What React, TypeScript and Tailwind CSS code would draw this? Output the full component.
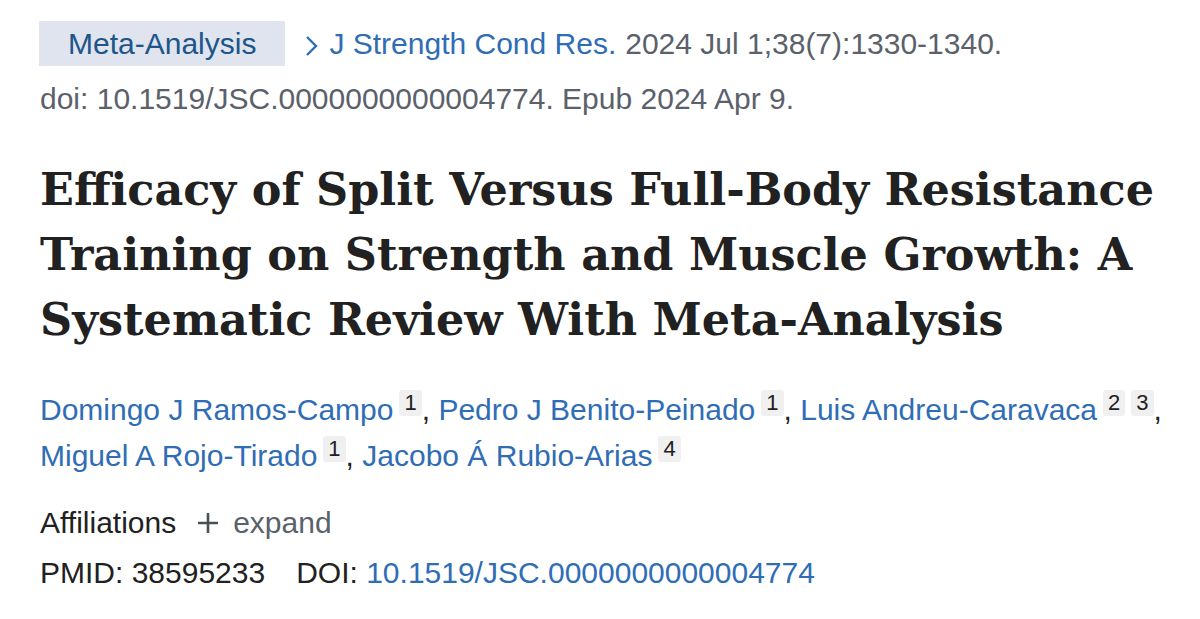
import React from "react";

const sans = { fontFamily: '"Liberation Sans", Arial, sans-serif' };

function Aff({ n }: { n: string }) {
  return (
    <span className="relative top-[-9px] ml-[6px] inline-block rounded-[3px] bg-[#f0f0f0] px-[5px] align-middle text-[22px] leading-[26px] text-[#212121]">
      {n}
    </span>
  );
}

function Author({ name, affs }: { name: string; affs: string[] }) {
  return (
    <span>
      <a className="text-[#2f6db5]">{name}</a>
      {affs.map((a) => (
        <Aff key={a} n={a} />
      ))}
    </span>
  );
}

export default function App() {
  return (
    <div className="min-h-screen w-full bg-white pl-[40px] pt-[21px] text-[30px]" style={sans}>
      {/* header row */}
      <div className="flex items-center">
        <span className="-ml-[1px] inline-block h-[45px] bg-[#dfe4ee] px-[29px] leading-[45px] text-[#20558a]">
          Meta-Analysis
        </span>
        <span className="ml-[20px] text-[#2f6db5]">
          <svg className="mr-[10px] inline-block" width="14" height="22" viewBox="0 0 14 22">
            <path d="M2 2 L11 11 L2 20" stroke="#2f6db5" strokeWidth="2.4" fill="none" />
          </svg>
          J Strength Cond Res.
        </span>
        <span className="ml-[9px] text-[#5b616b]">2024 Jul 1;38(7):1330-1340.</span>
      </div>
      <div className="mt-[16px] leading-[34px] text-[#5b616b]">
        doi: 10.1519/JSC.0000000000004774. Epub 2024 Apr 9.
      </div>

      {/* title */}
      <h1
        className="mt-[41px] text-[44.5px] font-bold leading-[65px] text-[#212121]"
        style={{ fontFamily: '"DejaVu Serif", Georgia, serif' }}
      >
        Efficacy of Split Versus Full-Body Resistance
        <br />
        Training on Strength and Muscle Growth: A
        <br />
        Systematic Review With Meta-Analysis
      </h1>

      {/* authors */}
      <div className="mt-[35px] leading-[46px] text-[#212121]">
        <Author name="Domingo J Ramos-Campo" affs={["1"]} />,{" "}
        <Author name="Pedro J Benito-Peinado" affs={["1"]} />,{" "}
        <Author name="Luis Andreu-Caravaca" affs={["2", "3"]} />,
        <br />
        <Author name="Miguel A Rojo-Tirado" affs={["1"]} />,{" "}
        <Author name="Jacobo Á Rubio-Arias" affs={["4"]} />
      </div>

      {/* affiliations */}
      <div className="mt-[24px] flex items-center leading-[40px] text-[#212121]">
        <span>Affiliations</span>
        <span className="ml-[21px] flex items-center text-[#5b616b]">
          <svg width="22" height="22" viewBox="0 0 22 22" className="mr-[14px]">
            <path d="M11 1 V21 M1 11 H21" stroke="#4a4f56" strokeWidth="2.6" />
          </svg>
          expand
        </span>
      </div>
      <div className="mt-[10px] flex leading-[40px] text-[#212121]">
        <span>PMID: 38595233</span>
        <span className="ml-[31px]">
          DOI: <a className="text-[#2f6db5]">10.1519/JSC.0000000000004774</a>
        </span>
      </div>
    </div>
  );
}
